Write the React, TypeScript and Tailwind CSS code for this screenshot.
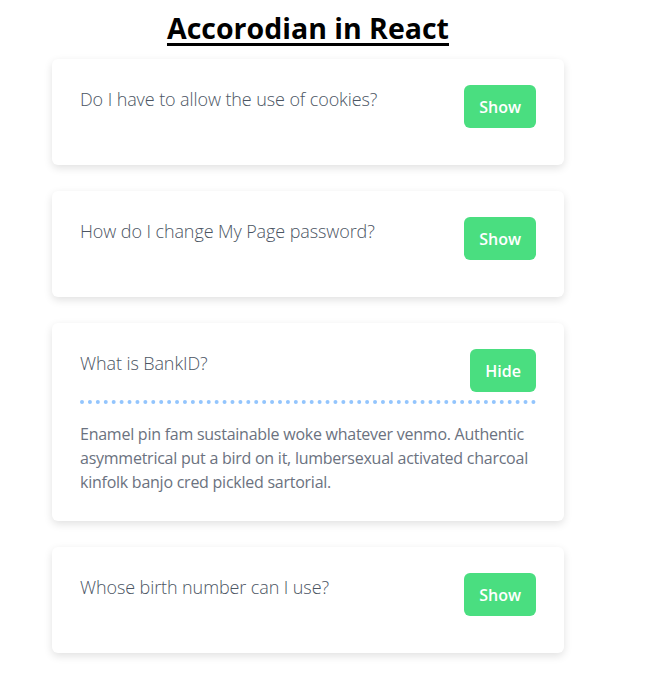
import React, { useState } from "react";

const answer =
  "Enamel pin fam sustainable woke whatever venmo. Authentic asymmetrical put a bird on it, lumbersexual activated charcoal kinfolk banjo cred pickled sartorial.";

const items = [
  { q: "Do I have to allow the use of cookies?", a: answer },
  { q: "How do I change My Page password?", a: answer },
  { q: "What is BankID?", a: answer },
  { q: "Whose birth number can I use?", a: answer },
];

function Item({ q, a, initial }: { q: string; a: string; initial: boolean }) {
  const [open, setOpen] = useState(initial);
  return (
    <div
      className={
        "bg-white rounded-md shadow-[0_3px_8px_rgba(0,0,0,0.12)] px-7 pt-[26px] " +
        (open ? "pb-[27px]" : "pb-[26px]")
      }
    >
      <div
        className={
          "flex justify-between items-start " +
          (open ? "pb-[8px] border-b-4 border-dotted border-[#93c5fd]" : "pb-[11px]")
        }
      >
        <h4 className="text-[18px] font-light leading-[26px] pt-[1px] tracking-[-0.1px] text-[#4b5563]">{q}</h4>
        <button
          onClick={() => setOpen(!open)}
          className="h-[43px] px-[15px] rounded-md bg-[#4ade80] text-white text-[16px] font-semibold"
        >
          {open ? "Hide" : "Show"}
        </button>
      </div>
      {open && (
        <p className="pt-[18px] text-[16px] leading-[24px] tracking-[-0.25px] text-[#6b7280]">{a}</p>
      )}
    </div>
  );
}

export default function App() {
  return (
    <div className="min-h-screen bg-white" style={{ fontFamily: '"Open Sans", "Noto Sans", sans-serif' }}>
      <div className="w-[512px] ml-[52px] pt-[10px]">
        <h1 className="text-center text-[28.5px] font-bold leading-[36px] underline decoration-[3px] underline-offset-[4px] text-black mb-[13px]">
          Accorodian in React
        </h1>
        <div className="flex flex-col gap-[26px]">
          {items.map((it, i) => (
            <Item key={i} q={it.q} a={it.a} initial={i === 2} />
          ))}
        </div>
      </div>
    </div>
  );
}
